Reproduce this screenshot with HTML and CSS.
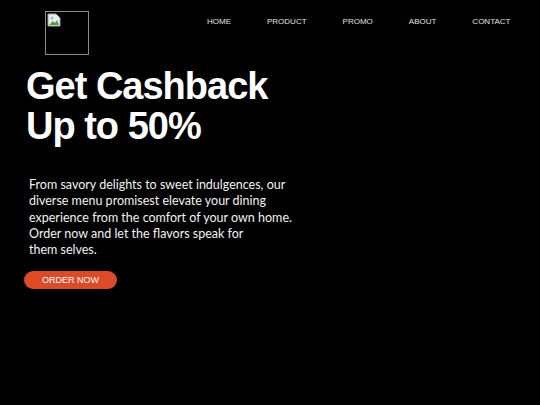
FILE: index.html
```html
<!DOCTYPE html>
<html>
<head>
<meta charset="utf-8">
<link rel="stylesheet" href="styles.css">
</head>
<body>
<header class="topbar">
  <div class="logo">
    <svg class="broken" width="14" height="14" viewBox="0 0 14 14">
      <path d="M1 1h8l4 4v8H1z" fill="#e8eef0" stroke="#9aa" stroke-width="1"/>
      <path d="M2 12l4-4 2 2 2-3 2 5z" fill="#5a9a3a"/>
      <circle cx="5" cy="5" r="1.3" fill="#7bb"/>
    </svg>
  </div>
  <nav class="nav">
    <a>HOME</a>
    <a>PRODUCT</a>
    <a>PROMO</a>
    <a>ABOUT</a>
    <a>CONTACT</a>
  </nav>
</header>
<main class="hero">
  <h1 class="title">Get Cashback<br>Up to 50%</h1>
  <p class="desc">From savory delights to sweet indulgences, our diverse menu promisest elevate your dining experience from the comfort of your own home. Order now and let the flavors speak for<br>them selves.</p>
  <button class="cta">ORDER NOW</button>
</main>
</body>
</html>
```
FILE: styles.css
```css
html, body {
  margin: 0;
  padding: 0;
  background: #000;
  height: 100%;
}
body {
  font-family: "Liberation Sans", Arial, sans-serif;
  color: #fff;
  overflow: hidden;
}
.topbar {
  display: flex;
  align-items: flex-start;
  padding: 11px 0 0 45px;
  height: 54px;
  box-sizing: border-box;
}
.logo {
  width: 40px;
  height: 40px;
  border: 1px solid #8a8a8a;
  padding: 1px;
  box-sizing: content-box;
}
.broken { display: block; }
.nav {
  display: flex;
  gap: 36px;
  margin-left: 118px;
  margin-top: 6px;
}
.nav a {
  font-size: 8px;
  color: #e2e2e2;
  text-decoration: none;
}
.hero {
  padding: 12px 0 0 26px;
}
.title {
  margin: 0;
  font-size: 38px;
  line-height: 40px;
  font-weight: bold;
  letter-spacing: -1px;
  font-family: "Liberation Sans", Arial, sans-serif;
}
.desc {
  margin: 31px 0 0 3px;
  width: 265px;
  font-family: "Lato", "Noto Sans", sans-serif;
  font-size: 12.5px;
  line-height: 16.3px;
  color: #f2f2f2;
}
.cta {
  margin: 13px 0 0 -2px;
  width: 93px;
  height: 18px;
  border: none;
  border-radius: 9px;
  background: #dc4a27;
  color: #fff;
  font-family: "Liberation Sans", Arial, sans-serif;
  font-size: 9px;
  padding: 0;
  display: block;
}
```
